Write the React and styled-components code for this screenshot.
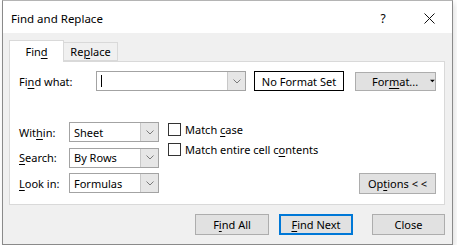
import styled, { createGlobalStyle } from 'styled-components'

const GlobalStyle = createGlobalStyle`
  html, body {
    margin: 0;
    padding: 0;
    background: #ffffff;
  }
  body {
    font-family: "Noto Sans", "Open Sans", "Liberation Sans", sans-serif;
    font-size: 11px;
    color: #000000;
  }
`

const Window = styled.div`
  box-sizing: border-box;
  margin-left: 2px;
  width: 451px;
  height: 245px;
  border: 1px solid #8a8a8a;
  border-top-color: #b4b4b4;
  background: #f0f0f0;
  display: flex;
  flex-direction: column;
  box-shadow: 2px 3px 6px rgba(0, 0, 0, 0.12);
`

const TitleBar = styled.div`
  height: 32px;
  background: #ffffff;
  display: flex;
  align-items: center;
  padding-left: 8px;
`

const Title = styled.div`
  flex: 1;
  font-size: 11.5px;
  padding-top: 2px;
`

const TitleBtn = styled.div`
  width: ${(p) => p.w}px;
  height: 32px;
  display: flex;
  align-items: center;
  justify-content: center;
  font-size: 12px;
  padding-top: 2px;
  box-sizing: border-box;
`

const Body = styled.div`
  flex: 1;
  padding: 7px 6px 0 6px;
  display: flex;
  flex-direction: column;
`

const Tabs = styled.div`
  display: flex;
  align-items: flex-end;
  height: 22px;
  position: relative;
  z-index: 1;
  margin-bottom: -1px;
`

const Tab = styled.div`
  box-sizing: border-box;
  width: ${(p) => p.w}px;
  height: ${(p) => (p.active ? 22 : 19)}px;
  margin-bottom: ${(p) => (p.active ? 0 : 1)}px;
  border: 1px solid #d9d9d9;
  border-bottom: ${(p) => (p.active ? 'none' : '1px solid #d9d9d9')};
  border-left: ${(p) => (p.active ? '1px solid #d9d9d9' : 'none')};
  background: ${(p) => (p.active ? '#ffffff' : '#f0f0f0')};
  display: flex;
  align-items: center;
  justify-content: center;
  padding-bottom: ${(p) => (p.active ? 1 : 0)}px;
`

const Panel = styled.div`
  box-sizing: border-box;
  width: 436px;
  height: 144px;
  background: #ffffff;
  border: 1px solid #d9d9d9;
  padding: 9px 8px 10px 8px;
  display: flex;
  flex-direction: column;
`

const FindRow = styled.div`
  display: flex;
  align-items: center;
  height: 20px;
`

const FindLabel = styled.div`
  width: 78px;
  padding-left: 1px;
  box-sizing: border-box;
`

const Combo = styled.div`
  box-sizing: border-box;
  width: ${(p) => p.w}px;
  height: 20px;
  border: 1px solid #a3a3a3;
  display: flex;
  align-items: stretch;
  background: #ffffff;
`

const ComboText = styled.div`
  flex: 1;
  display: flex;
  align-items: center;
  padding-left: 4px;
`

const Caret = styled.div`
  width: 1px;
  height: 12px;
  background: #000000;
`

const ComboBtn = styled.div`
  width: 17px;
  border-left: 1px solid #c8c8c8;
  background: #e6e6e6;
  display: flex;
  align-items: center;
  justify-content: center;
`

const FormatBox = styled.div`
  box-sizing: border-box;
  margin-left: 8px;
  width: 90px;
  height: 20px;
  border: 1px solid #000000;
  display: flex;
  align-items: center;
  justify-content: center;
`

const Button = styled.div`
  box-sizing: border-box;
  width: ${(p) => p.w}px;
  height: ${(p) => p.h || 21}px;
  margin-left: ${(p) => p.ml || 0}px;
  background: #e1e1e1;
  border: ${(p) => (p.primary ? '2px solid #0078d7' : '1px solid #adadad')};
  display: flex;
  align-items: center;
  justify-content: center;
  gap: 12px;
  padding-left: ${(p) => p.pl || 0}px;
`

const FormatBtn = styled(Button)`
  margin-left: auto;
`

const Lower = styled.div`
  margin-top: 31px;
  display: flex;
  align-items: flex-start;
  flex: 1;
`

const SelectGrid = styled.div`
  display: grid;
  grid-template-columns: 50px 90px;
  grid-auto-rows: 20px;
  row-gap: 5.5px;
  align-items: center;
  padding-left: 1px;
`

const Checks = styled.div`
  margin-left: 9px;
  display: flex;
  flex-direction: column;
  gap: 7px;
  padding-top: 1px;
`

const CheckRow = styled.div`
  display: flex;
  align-items: center;
  gap: 4px;
  height: 13px;
`

const Box = styled.div`
  box-sizing: border-box;
  width: 13px;
  height: 13px;
  border: 1px solid #333333;
  background: #ffffff;
`

const OptionsWrap = styled.div`
  margin-left: auto;
  align-self: flex-end;
`

const Footer = styled.div`
  display: flex;
  justify-content: flex-end;
  padding-top: 9px;
  width: 436px;
`

const U = styled.span`
  text-decoration: underline;
  text-underline-offset: 2px;
`

const Chevron = () => (
  <svg width="8" height="5" viewBox="0 0 8 5">
    <polyline points="0.5,0.5 4,4 7.5,0.5" fill="none" stroke="#7a7a7a" strokeWidth="1" />
  </svg>
)

function Select({ value }) {
  return (
    <Combo w={90}>
      <ComboText>{value}</ComboText>
      <ComboBtn>
        <Chevron />
      </ComboBtn>
    </Combo>
  )
}

export default function App() {
  return (
    <>
      <GlobalStyle />
      <Window>
        <TitleBar>
          <Title>Find and Replace</Title>
          <TitleBtn w={46}>?</TitleBtn>
          <TitleBtn w={46}>
            <svg width="11" height="11" viewBox="0 0 11 11">
              <path d="M0.5 0.5 L10.5 10.5 M10.5 0.5 L0.5 10.5" stroke="#111" strokeWidth="1" />
            </svg>
          </TitleBtn>
        </TitleBar>
        <Body>
          <Tabs>
            <Tab active w={55}>
              Fin<U>d</U>
            </Tab>
            <Tab w={54}>
              Re<U>p</U>lace
            </Tab>
          </Tabs>
          <Panel>
            <FindRow>
              <FindLabel>
                Fi<U>n</U>d what:
              </FindLabel>
              <Combo w={150}>
                <ComboText>
                  <Caret />
                </ComboText>
                <ComboBtn>
                  <Chevron />
                </ComboBtn>
              </Combo>
              <FormatBox>No Format Set</FormatBox>
              <FormatBtn w={81} h={19} pl={16}>
                <span>
                  For<U>m</U>at...
                </span>
                <svg width="7" height="4" viewBox="0 0 7 4">
                  <path d="M0 0 L7 0 L3.5 4 Z" fill="#000" />
                </svg>
              </FormatBtn>
            </FindRow>
            <Lower>
              <SelectGrid>
                <span>
                  Wit<U>h</U>in:
                </span>
                <Select value="Sheet" />
                <span>
                  <U>S</U>earch:
                </span>
                <Select value="By Rows" />
                <span>
                  <U>L</U>ook in:
                </span>
                <Select value="Formulas" />
              </SelectGrid>
              <Checks>
                <CheckRow>
                  <Box />
                  <span>
                    Match <U>c</U>ase
                  </span>
                </CheckRow>
                <CheckRow>
                  <Box />
                  <span>
                    Match entire cell c<U>o</U>ntents
                  </span>
                </CheckRow>
              </Checks>
              <OptionsWrap>
                <Button w={77} h={21}>
                  <span>
                    Op<U>t</U>ions &lt; &lt;
                  </span>
                </Button>
              </OptionsWrap>
            </Lower>
          </Panel>
          <Footer>
            <Button w={74}>
              <span>
                F<U>i</U>nd All
              </span>
            </Button>
            <Button w={74} ml={10} primary>
              <span>
                <U>F</U>ind Next
              </span>
            </Button>
            <Button w={73} ml={19}>
              Close
            </Button>
          </Footer>
        </Body>
      </Window>
    </>
  )
}
